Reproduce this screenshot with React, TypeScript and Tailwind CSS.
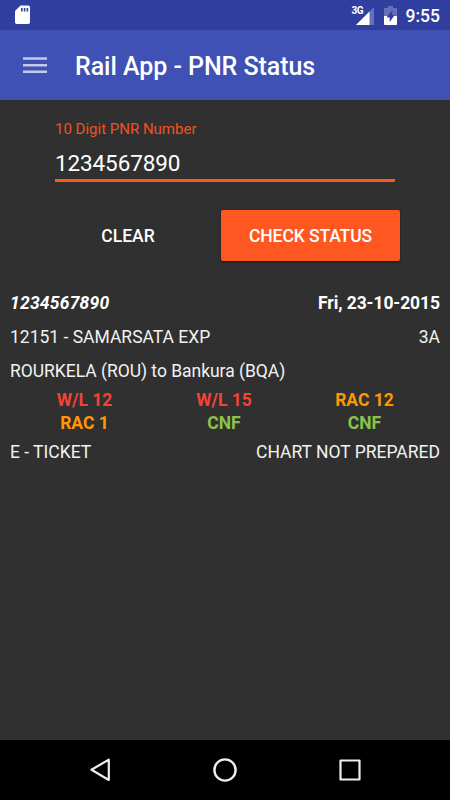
import React from "react";

function StatusBar() {
  return (
    <header className="flex h-[30px] items-center justify-between bg-[#303f9f] pl-[15px] pr-[10px]">
      <svg width="15" height="20" viewBox="0 0 15 20" className="-mt-px">
        <path d="M5.5 0.5H13.2Q15 0.5 15 2.3V17.2Q15 19 13.2 19H1.8Q0 19 0 17.2V6Z" fill="#fff" />
        <path d="M6 3h1.6v3.6H6zM8.8 3h1.6v3.6H8.8zM11.6 3h1.6v3.6h-1.6z" fill="#303f9f" />
      </svg>
      <div className="flex h-full items-center">
        <span className="-mr-[7px] mb-[9px] w-[11px] text-[10px] leading-none font-bold tracking-[-0.6px]">3G</span>
        <svg width="18" height="18" viewBox="0 0 18 18" className="mt-px">
          <path d="M18 0V18H0Z" fill="#6470b7" />
          <path d="M13.5 4.5V18H0Z" fill="#fff" />
        </svg>
        <svg width="13" height="19" viewBox="0 0 13 19" className="ml-[10px]">
          <path d="M4 0H9V2H13V19H0V2H4Z" fill="#6470b7" />
          <path d="M0 10H13V18Q13 19 12 19H1Q0 19 0 18Z" fill="#fff" />
          <path d="M8.5 4L2.5 11.5H5.7V16L10.7 9H8Z" fill="#303f9f" />
        </svg>
        <span className="ml-[9px] mt-[3px] text-[17.5px] leading-none font-medium">9:55</span>
      </div>
    </header>
  );
}

function AppBar() {
  return (
    <div className="flex h-[70px] items-center bg-[#3f51b5] pl-[23px]">
      <svg width="24" height="18" viewBox="0 0 24 18" className="-mt-px" fill="#c5cae9">
        <path d="M0 1.2h24v2.5H0zM0 7.9h24v2.5H0zM0 14.6h24v2.5H0z" />
      </svg>
      <h1 className="ml-7 mt-[3px] text-[25px] leading-[30px] font-medium tracking-[-0.05px]">Rail App - PNR Status</h1>
    </div>
  );
}

const passengers = [
  { text: "W/L 12", color: "text-[#f44336]" },
  { text: "W/L 15", color: "text-[#f44336]" },
  { text: "RAC 12", color: "text-[#ff9800]" },
  { text: "RAC 1", color: "text-[#ff9800]" },
  { text: "CNF", color: "text-[#8bc34a]" },
  { text: "CNF", color: "text-[#8bc34a]" },
];

export default function App() {
  return (
    <div className="flex h-[800px] w-[450px] flex-col overflow-hidden bg-[#303030] font-['Roboto',sans-serif] text-white">
      <StatusBar />
      <AppBar />
      <main className="flex-1">
        <section className="px-[55px] pt-[19px]">
          <div className="text-[15px] leading-5 text-[#f4511e]">10 Digit PNR Number</div>
          <div className="mt-[9px] h-[34px] border-b-[3px] border-[#ff5722] text-[22.5px] leading-[30px] tracking-[-0.12px]">1234567890</div>
        </section>
        <div className="mt-[28px] flex h-[51px] pl-[35px]">
          <button className="w-[186px] pt-[2px] text-[17.5px] font-medium">CLEAR</button>
          <button className="w-[179px] rounded-[2px] bg-[#ff5722] pt-[2px] text-[17.5px] font-medium tracking-[-0.1px] shadow-[0_1px_2px_#0008]">CHECK STATUS</button>
        </div>
        <section className="px-[10px] pt-[25px] text-[17.5px] leading-[34px]">
          <div className="flex justify-between font-bold">
            <span className="italic tracking-[0.2px]">1234567890</span>
            <span className="tracking-[-0.08px]">Fri, 23-10-2015</span>
          </div>
          <div className="flex justify-between text-[#f2f2f2]">
            <span>12151 - SAMARSATA EXP</span>
            <span>3A</span>
          </div>
          <div className="tracking-[-0.03px] text-[#f2f2f2]">ROURKELA (ROU) to Bankura (BQA)</div>
          <div className="grid grid-cols-[149px_130px_151px] grid-rows-[24px_23px] text-center leading-6 font-bold">
            {passengers.map((p, i) => (
              <span key={i} className={i < 3 ? p.color : `${p.color} -mt-px`}>{p.text}</span>
            ))}
          </div>
          <div className="flex justify-between text-[#f2f2f2]">
            <span>E - TICKET</span>
            <span>CHART NOT PREPARED</span>
          </div>
        </section>
      </main>
      <nav className="flex h-[60px] items-center justify-around bg-black px-[37px]">
        <svg width="26" height="26" viewBox="0 0 26 26" fill="none" stroke="#eee" strokeWidth="2.2" strokeLinejoin="round">
          <path d="M21.8 2.6V23L4.5 12.8Z" />
        </svg>
        <svg width="26" height="26" viewBox="0 0 26 26" fill="none" stroke="#eee" strokeWidth="2.4">
          <circle cx="13" cy="13" r="10.6" />
        </svg>
        <svg width="26" height="26" viewBox="0 0 26 26" fill="none" stroke="#eee" strokeWidth="2.2" strokeLinejoin="round">
          <path d="M3.5 3.5H22.5V22.5H3.5Z" />
        </svg>
      </nav>
    </div>
  );
}
